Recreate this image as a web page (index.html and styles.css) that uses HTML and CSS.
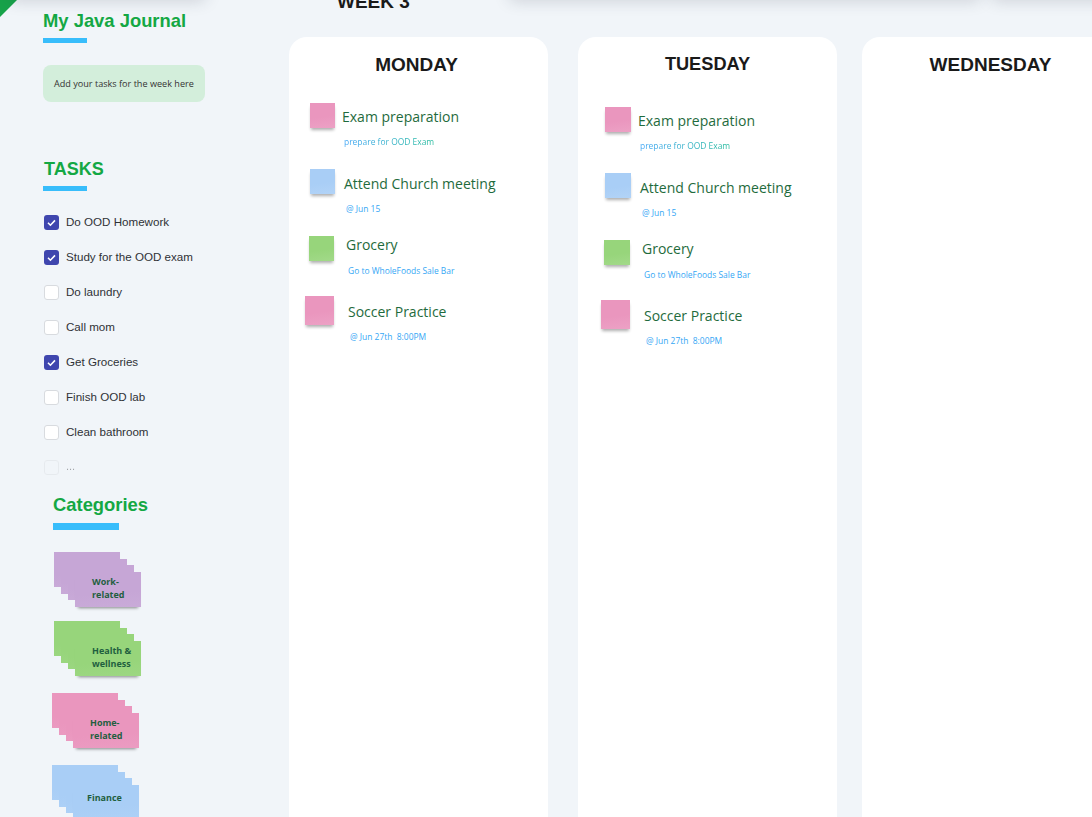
FILE: index.html
```html
<!DOCTYPE html>
<html lang="en">
<head>
<meta charset="utf-8">
<title>My Java Journal</title>
<link rel="stylesheet" href="styles.css">
</head>
<body>
<div class="page">
  <div class="corner"></div>
  <div class="edge edge-a"></div>
  <div class="edge edge-b"></div>
  <div class="edge edge-c"></div>
  <aside class="sidebar">
    <h1 class="brand">My Java Journal</h1>
    <div class="rule"></div>
    <div class="pill">Add your tasks for the week here</div>
    <h2 class="tasks-title">TASKS</h2>
    <div class="rule"></div>
    <ul class="tasks">
      <li class="task"><span class="box checked"><svg viewBox="0 0 15 15" class="tick"><path d="M4 7.8l2.4 2.4L11 5.4"/></svg></span>Do OOD Homework</li>
      <li class="task"><span class="box checked"><svg viewBox="0 0 15 15" class="tick"><path d="M4 7.8l2.4 2.4L11 5.4"/></svg></span>Study for the OOD exam</li>
      <li class="task"><span class="box"></span>Do laundry</li>
      <li class="task"><span class="box"></span>Call mom</li>
      <li class="task"><span class="box checked"><svg viewBox="0 0 15 15" class="tick"><path d="M4 7.8l2.4 2.4L11 5.4"/></svg></span>Get Groceries</li>
      <li class="task"><span class="box"></span>Finish OOD lab</li>
      <li class="task"><span class="box"></span>Clean bathroom</li>
      <li class="task faded"><span class="box"></span>...</li>
    </ul>
    <section class="categories">
      <h2 class="cat-title">Categories</h2>
      <div class="rule rule-wide"></div>
      <div class="stack purple s1">
        <i></i><i></i><i></i><i></i>
        <span class="stack-label">Work-<br>related</span>
      </div>
      <div class="stack green s2">
        <i></i><i></i><i></i><i></i>
        <span class="stack-label">Health &amp;<br>wellness</span>
      </div>
      <div class="stack pink s3">
        <i></i><i></i><i></i><i></i>
        <span class="stack-label">Home-<br>related</span>
      </div>
      <div class="stack blue s4">
        <i></i><i></i><i></i><i></i>
        <span class="stack-label">Finance</span>
      </div>
    </section>
  </aside>
  <main class="main">
    <h2 class="week">WEEK 3</h2>
    <div class="days">
      <section class="day monday">
        <h3 class="day-title">MONDAY</h3>
        <div class="entry e1"><div class="note pink"></div><div class="text"><p class="name">Exam preparation</p><p class="sub grad">prepare for OOD Exam</p></div></div>
        <div class="entry e2"><div class="note blue"></div><div class="text"><p class="name">Attend Church meeting</p><p class="sub">@ Jun 15</p></div></div>
        <div class="entry e3"><div class="note green"></div><div class="text"><p class="name">Grocery</p><p class="sub">Go to WholeFoods Sale Bar</p></div></div>
        <div class="entry e4"><div class="note pink"></div><div class="text"><p class="name">Soccer Practice</p><p class="sub">@ Jun 27th&nbsp; 8:00PM</p></div></div>
      </section>
      <section class="day tuesday">
        <h3 class="day-title">TUESDAY</h3>
        <div class="entry e1"><div class="note pink"></div><div class="text"><p class="name">Exam preparation</p><p class="sub grad">prepare for OOD Exam</p></div></div>
        <div class="entry e2"><div class="note blue"></div><div class="text"><p class="name">Attend Church meeting</p><p class="sub">@ Jun 15</p></div></div>
        <div class="entry e3"><div class="note green"></div><div class="text"><p class="name">Grocery</p><p class="sub">Go to WholeFoods Sale Bar</p></div></div>
        <div class="entry e4"><div class="note pink"></div><div class="text"><p class="name">Soccer Practice</p><p class="sub">@ Jun 27th&nbsp; 8:00PM</p></div></div>
      </section>
      <section class="day wednesday">
        <h3 class="day-title">WEDNESDAY</h3>
      </section>
    </div>
  </main>
</div>
</body>
</html>
```
FILE: styles.css
```css
* { box-sizing: border-box; }
html, body { margin: 0; height: 100%; overflow: hidden; }
body { font-family: "Liberation Sans", Arial, sans-serif; background: #f1f5f9; }
h1, h2, h3, p, ul { margin: 0; padding: 0; }

.page { position: relative; display: flex; width: 1092px; height: 817px; overflow: hidden; background: #f1f5f9; }

.corner { position: absolute; left: 0; top: 0; width: 17px; height: 17px; background: #17a34a; clip-path: polygon(0 0, 100% 0, 0 100%); }
.edge { position: absolute; top: -12px; height: 12px; background: #fff; box-shadow: 0 0 16px rgba(40, 50, 70, .22); }
.edge-a { left: 10px; width: 195px; }
.edge-b { left: 510px; width: 470px; }
.edge-c { left: 992px; width: 120px; }

/* sidebar */
.sidebar { flex: none; width: 289px; padding: 10px 0 0 43px; }
.brand, .tasks-title, .cat-title { font-size: 18.4px; line-height: 22px; font-weight: 700; color: #14a844; }
.rule { width: 44px; height: 5px; margin-top: 6px; background: #38bdfb; }
.pill { width: 162px; height: 37px; margin-top: 22px; padding-left: 11px; border-radius: 8px; background: #d3eedb; color: #333; font: 400 9.1px/37px "Open Sans", sans-serif; }
.tasks-title { margin: 56px 0 0 1px; font-size: 18px; }
.tasks { list-style: none; margin-top: 13.5px; width: 200px; }
.task { display: flex; align-items: center; height: 35px; padding-bottom: 2px; font-size: 11.6px; color: #2f3136; }
.box { flex: none; display: block; width: 15px; height: 15px; margin: 2px 7px 0 1px; border: 1.5px solid #d8dbdf; border-radius: 3px; background: #fff; }
.box.checked { border: 0; background: #3f46ae; }
.tick { display: block; width: 15px; height: 15px; fill: none; stroke: #fff; stroke-width: 1.6; }
.faded { opacity: .4; font-size: 11px; }
.faded .box { background: #f1f5f9; }

.categories { margin: 9.5px 0 0 10px; }
.rule-wide { width: 66px; height: 7px; margin-top: 7px; margin-bottom: 22px; }

.stack { display: grid; width: 90px; height: 56px; margin: 0 0 13px 1px; font-family: "Open Sans", sans-serif; }
.stack i { grid-area: 1 / 1; width: 66px; height: 35px; background: linear-gradient(176deg, var(--fill), var(--fill) 60%, #ffffff22 160%), var(--fill); }
.stack i:nth-child(2) { margin: 6.5px 0 0 7px; }
.stack i:nth-child(3) { margin: 13px 0 0 14px; }
.stack i:nth-child(4) { margin: 19.5px 0 0 21px; box-shadow: 0 4px 3px -3px rgba(0, 0, 0, .45); }
.stack-label { grid-area: 1 / 1; z-index: 1; margin: 22.5px 0 0 38px; font-size: 9px; line-height: 13px; font-weight: 700; color: #1f5f3f; }
.s2 { margin-bottom: 16px; }
.s3 { margin-left: -1px; margin-bottom: 16px; }
.s3 .stack-label { margin-top: 23px; }
.s4 { margin-left: -1px; }
.s4 .stack-label { margin: 26px 0 0 35px; }

.pink { --fill: #ea96be; }
.blue { --fill: #a9cef6; }
.green { --fill: #97d57b; }
.purple { --fill: #c6a6d6; }

/* main */
.main { flex: none; width: 803px; }
.week { margin: -9px 0 0 48px; font-size: 19px; line-height: 22px; font-weight: 700; color: #1a1a1a; }
.days { display: flex; gap: 30px; margin-top: 24px; }
.day { flex: none; width: 259px; height: 900px; border-radius: 18px; background: #fff; }
.wednesday { margin-left: -5px; }
.day-title { padding: 18px 2px 0 0; height: 66px; font-size: 19px; line-height: 20px; font-weight: 700; text-align: center; color: #1a1a1a; }
.monday .day-title { padding-right: 4px; }
.tuesday .day-title { padding: 17px 0 0; height: 70px; font-size: 18.2px; }

.entry { display: flex; align-items: flex-start; font-family: "Open Sans", sans-serif; }
.note { flex: none; width: 25px; height: 25px; background: linear-gradient(172deg, var(--fill) 55%, #fff3 140%), var(--fill); box-shadow: 0 3px 3px -1px rgba(0, 0, 0, .32); }
.name { font-size: 14px; line-height: 20px; color: #1f6b3d; white-space: nowrap; }
.sub { margin: 9px 0 0 2px; font-size: 8.45px; line-height: 12px; color: #35a7f5; white-space: nowrap; }
.grad { width: max-content; background: linear-gradient(90deg, #3fa5f7, #20b99a); -webkit-background-clip: text; background-clip: text; color: transparent; }

.e1 { margin-left: 21px; }
.e1 .text { margin: 4px 0 0 7px; }
.e2 { margin: 21px 0 0 21px; }
.e2 .text { margin: 5px 0 0 9px; }
.e3 { margin: 21px 0 0 20px; }
.e3 .text { margin: -1px 0 0 12px; }
.e3 .sub { margin-top: 10px; }
.e4 { margin: 19px 0 0 16px; }
.e4 .note { width: 29px; height: 29px; }
.e4 .text { margin: 6px 0 0 14px; }

.tuesday .e1 { margin-left: 27px; }
.tuesday .e2 { margin-left: 27px; }
.tuesday .e3 { margin-left: 26px; }
.tuesday .e4 { margin-left: 23px; }
.tuesday .note { width: 26px; }
.tuesday .e4 .note { width: 29px; }
```
